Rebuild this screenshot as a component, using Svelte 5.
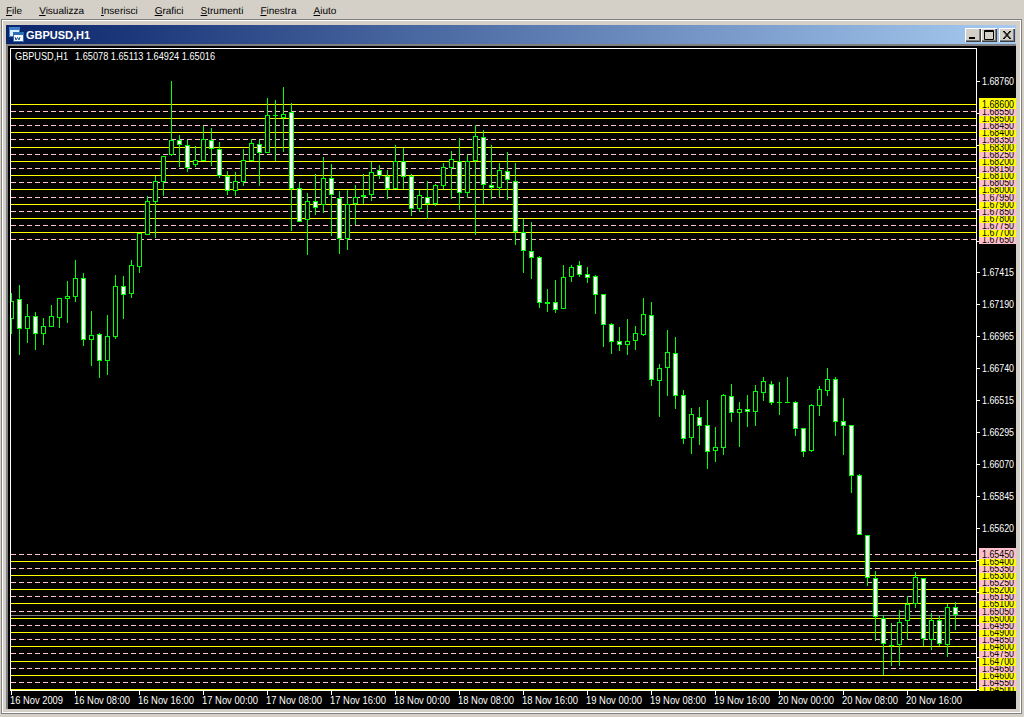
<script>
	const menu = ['File', 'Visualizza', 'Inserisci', 'Grafici', 'Strumenti', 'Finestra', 'Aiuto'];

	// y of each price level, from the top of its group, yellow and pink in turn
	const topYs = [104, 111, 118, 125, 132, 139, 147, 154, 161, 168, 175, 182, 189, 197, 204, 211, 218, 225, 232, 239];
	const lowYs = [554, 561, 568, 575, 582, 589, 596, 603, 611, 618, 625, 632, 639, 646, 653, 661, 668, 675, 682, 689];

	function level(start, ys, firstYellow) {
		return ys.map((y, i) => ({
			y,
			price: (start - i * 0.0005).toFixed(5),
			yellow: i % 2 === 0 ? firstYellow : !firstYellow
		}));
	}
	const levels = [...level(1.686, topYs, true), ...level(1.6545, lowYs, false)];

	const axisPrices = [
		['1.68760', 81],
		['1.67415', 272],
		['1.67190', 304],
		['1.66965', 336],
		['1.66740', 368],
		['1.66515', 400],
		['1.66295', 432],
		['1.66070', 464],
		['1.65845', 496],
		['1.65620', 528]
	];
	const priceTicks = [81, 113, 145, 177, 209, 241, 272, 304, 336, 368, 400, 432, 464, 496, 528, 560, 592, 625, 657, 689];

	const times = [
		'16 Nov 2009', '16 Nov 08:00', '16 Nov 16:00', '17 Nov 00:00', '17 Nov 08:00',
		'17 Nov 16:00', '18 Nov 00:00', '18 Nov 08:00', '18 Nov 16:00', '19 Nov 00:00',
		'19 Nov 08:00', '19 Nov 16:00', '20 Nov 00:00', '20 Nov 08:00', '20 Nov 16:00'
	];

	// high, low, body top, body bottom, white body
	const bars = [
		[293, 334, 301, 319, 0], [285, 355, 299, 329, 1], [304, 343, 316, 329, 0], [312, 350, 316, 334, 1],
		[318, 345, 326, 334, 0], [305, 327, 316, 327, 0], [298, 328, 298, 318, 0], [281, 323, 296, 299, 0],
		[260, 302, 278, 297, 0], [273, 346, 278, 340, 1], [311, 366, 335, 340, 0], [333, 378, 334, 361, 1],
		[315, 375, 336, 361, 0], [275, 339, 286, 337, 0], [276, 319, 286, 295, 1], [260, 298, 265, 294, 0],
		[233, 273, 233, 267, 0], [196, 235, 201, 235, 0], [176, 238, 181, 202, 0], [156, 196, 156, 182, 0],
		[81, 156, 140, 155, 0], [135, 167, 140, 145, 1], [140, 172, 145, 168, 1], [146, 167, 160, 165, 0],
		[126, 161, 139, 161, 0], [128, 166, 140, 149, 1], [142, 178, 149, 176, 1], [171, 195, 176, 191, 1],
		[172, 196, 181, 191, 0], [149, 186, 160, 182, 0], [139, 161, 143, 161, 0], [140, 186, 144, 153, 1],
		[98, 153, 115, 153, 0], [100, 161, 115, 116, 0], [87, 152, 114, 118, 0], [103, 231, 112, 189, 1],
		[183, 222, 188, 222, 1], [193, 255, 201, 220, 0], [174, 215, 201, 208, 1], [157, 213, 178, 205, 0],
		[164, 236, 178, 195, 1], [191, 254, 198, 239, 1], [190, 250, 204, 239, 0], [185, 225, 197, 204, 0],
		[174, 204, 195, 197, 0], [162, 201, 172, 195, 0], [165, 179, 170, 176, 1], [170, 199, 176, 189, 1],
		[145, 189, 161, 189, 0], [148, 189, 161, 177, 1], [174, 216, 176, 209, 1], [190, 212, 195, 209, 0],
		[181, 219, 197, 204, 1], [184, 206, 185, 204, 0], [163, 189, 167, 186, 0], [151, 199, 159, 168, 0],
		[138, 210, 161, 193, 1], [155, 198, 161, 193, 0], [125, 235, 136, 161, 0], [130, 204, 137, 185, 1],
		[145, 199, 185, 188, 1], [163, 197, 170, 188, 0], [152, 200, 171, 180, 1], [163, 245, 181, 232, 1],
		[219, 273, 232, 251, 1], [222, 279, 251, 258, 1], [256, 308, 257, 303, 1], [289, 312, 302, 304, 0],
		[280, 313, 302, 310, 1], [265, 309, 277, 309, 0], [265, 282, 267, 277, 0], [261, 277, 265, 275, 1],
		[267, 283, 274, 278, 1], [275, 314, 276, 295, 1], [294, 347, 294, 325, 1], [323, 354, 324, 342, 1],
		[327, 351, 341, 345, 1], [319, 355, 341, 345, 0], [326, 350, 333, 341, 0], [298, 336, 314, 335, 0],
		[302, 386, 315, 380, 1], [364, 417, 368, 381, 0], [330, 396, 352, 368, 0], [337, 409, 353, 396, 1],
		[390, 444, 395, 439, 1], [408, 454, 414, 438, 0], [407, 445, 417, 426, 1], [400, 469, 425, 452, 1],
		[427, 462, 447, 451, 0], [394, 455, 395, 448, 0], [384, 422, 396, 413, 1], [402, 447, 409, 413, 0],
		[395, 427, 409, 412, 1], [385, 426, 391, 412, 0], [377, 401, 381, 393, 0], [381, 405, 384, 403, 1],
		[382, 415, 402, 403, 0], [377, 403, 402, 403, 0], [401, 436, 402, 429, 1], [428, 457, 428, 452, 1],
		[404, 452, 405, 451, 0], [386, 416, 389, 406, 0], [368, 396, 379, 391, 0], [377, 436, 379, 422, 1],
		[398, 455, 421, 426, 1], [425, 493, 425, 476, 1], [474, 535, 475, 535, 1], [535, 586, 535, 578, 1],
		[571, 641, 578, 617, 1], [615, 675, 618, 644, 1], [623, 666, 645, 646, 0], [610, 666, 622, 645, 0],
		[596, 640, 604, 621, 0], [572, 608, 577, 604, 0], [578, 646, 578, 639, 1], [613, 650, 620, 640, 0],
		[616, 646, 620, 644, 1], [604, 657, 607, 645, 0], [602, 630, 607, 615, 1]
	];
</script>

<div class="screen">
	<nav class="menubar">
		{#each menu as item}
			<span class="menu-item"><u>{item[0]}</u>{item.slice(1)}</span>
		{/each}
	</nav>

	<div class="window">
		<header class="titlebar">
			<svg class="app-icon" width="15" height="15" viewBox="0 0 15 15">
				<rect x="0.5" y="0.5" width="10" height="9" fill="#dff0ff" stroke="#3f7fc8" />
				<rect x="1" y="1" width="9" height="2" fill="#3f7fc8" />
				<rect x="4.5" y="5.5" width="10" height="9" fill="#ffffff" stroke="#2f6fb8" />
				<rect x="5" y="6" width="9" height="2" fill="#2f6fb8" />
				<path d="M6 10l1 3 1.500-2.500 1.500 2.500 1-3" fill="none" stroke="#1f4f98" />
			</svg>
			<span class="title">GBPUSD,H1</span>
			<div class="buttons">
				<button aria-label="Riduci a icona">
					<svg width="12" height="10" viewBox="0 0 12 10"><rect x="2" y="7" width="6" height="2" fill="#000" /></svg>
				</button>
				<button aria-label="Ingrandisci">
					<svg width="12" height="10" viewBox="0 0 12 10"><path d="M1.500 0.500h9v9h-9zM1.500 1.500h9" fill="none" stroke="#000" /></svg>
				</button>
				<button class="close" aria-label="Chiudi">
					<svg width="12" height="10" viewBox="0 0 12 10"><path d="M2 1l7 8M9 1l-7 8M3 1l7 8M10 1l-7 8" fill="none" stroke="#000" /></svg>
				</button>
			</div>
		</header>

		<div class="client">
			<svg class="chart" width="1008" height="663" viewBox="8 46 1008 663">
				<defs>
					<clipPath id="plot"><rect x="11" y="49" width="965" height="641" /></clipPath>
					<clipPath id="scale"><rect x="977" y="49" width="39" height="642" /></clipPath>
				</defs>

				<g class="crisp" clip-path="url(#plot)">
					{#each levels as l}
						{#if l.yellow}
							<line x1="11" x2="976" y1={l.y + 0.5} y2={l.y + 0.5} stroke="#ffff00" />
						{:else}
							<line x1="11" x2="976" y1={l.y + 0.5} y2={l.y + 0.5} stroke="#ffc0cb" stroke-dasharray="5 3" />
						{/if}
					{/each}
					<line x1="11" x2="976" y1="615.5" y2="615.5" stroke="#808080" />

					{#each bars as [high, low, top, bottom, white], i}
						{@const x = 11 + i * 8}
						<line x1={x + 0.5} x2={x + 0.5} y1={high} y2={low} stroke="#00ff00" />
						{#if bottom - top <= 2}
							<rect x={x - 2} y={top} width="5" height={bottom - top} fill="#00ff00" />
						{:else}
							<rect
								x={x - 1.5}
								y={top + 0.5}
								width="4"
								height={bottom - top - 1}
								fill={white ? '#ffffff' : '#000000'}
								stroke="#00ff00"
							/>
						{/if}
					{/each}
				</g>

				<g class="crisp">
					{#each priceTicks as y}
						<line x1="977" x2="980" y1={y + 0.5} y2={y + 0.5} stroke="#ffffff" />
					{/each}
					{#each times as _, i}
						<line x1={11.5 + i * 64} x2={11.5 + i * 64} y1="691" y2="695" stroke="#ffffff" />
					{/each}
				</g>

				<text class="white" x="15" y="60" textLength="53" lengthAdjust="spacingAndGlyphs">GBPUSD,H1</text>
				<text class="white" x="75" y="60" textLength="140" lengthAdjust="spacingAndGlyphs">1.65078 1.65113 1.64924 1.65016</text>

				{#each axisPrices as [price, y]}
					<text class="white" x="982" y={y + 4} textLength="32" lengthAdjust="spacingAndGlyphs">{price}</text>
				{/each}

				<!-- the upper labels sit on top of the lower ones -->
				<g clip-path="url(#scale)">
					{#each [...levels].reverse() as l}
						<rect class="crisp" x="979" y={l.y - 6} width="37" height="11" fill={l.yellow ? '#ffff00' : '#ffc0cb'} />
						<text class="dark" x="982" y={l.y + 4} textLength="32" lengthAdjust="spacingAndGlyphs">{l.price}</text>
					{/each}
				</g>

				{#each times as label, i}
					<text
						class="white"
						x={10 + i * 64}
						y="704"
						textLength={i === 0 ? 53 : 56}
						lengthAdjust="spacingAndGlyphs">{label}</text>
				{/each}

				<rect class="crisp" x="10.500" y="48.500" width="966" height="642" fill="none" stroke="#ffffff" />
			</svg>
		</div>
	</div>
</div>

<style>
	:global(body) {
		background: #d4d0c8;
		overflow: hidden;
	}

	.screen {
		display: flex;
		flex-direction: column;
		width: 1024px;
		height: 717px;
		font-family: 'Liberation Sans', Arial, sans-serif;
		font-size: 11px;
		color: #000;
	}

	.menubar {
		display: flex;
		gap: 17px;
		align-items: center;
		height: 19px;
		padding: 4px 0 0 6px;
		box-sizing: border-box;
		font-size: 10px;
		text-rendering: geometricPrecision;
	}

	.window {
		display: flex;
		flex-direction: column;
		margin: 0 2px 0 1px;
		padding: 5px 5px 3px 4px;
		height: 695px;
		box-sizing: border-box;
		border: 1px solid #808080;
		box-shadow: inset 1px 1px 0 #ffffff, inset -1px -1px 0 #ffffff;
	}

	.titlebar {
		display: flex;
		align-items: center;
		flex: none;
		height: 19px;
		padding: 0 1px 0 3px;
		color: #fff;
		background: linear-gradient(to right, #0a246a, #a6caf0);
	}

	.app-icon {
		flex: none;
	}

	.title {
		margin-left: 2px;
		font-weight: bold;
		font-size: 11px;
		letter-spacing: 0;
	}

	.buttons {
		display: flex;
		margin-left: auto;
	}

	.buttons button {
		display: flex;
		align-items: center;
		justify-content: center;
		width: 16px;
		height: 14px;
		padding: 0;
		border: 0;
		background: #d4d0c8;
		box-shadow: inset 1px 1px 0 #ffffff, inset -1px -1px 0 #404040, inset -2px -2px 0 #808080;
	}

	.buttons .close {
		margin-left: 2px;
	}

	.client {
		flex: none;
		height: 665px;
		border-top: 2px solid #808080;
		border-left: 2px solid #808080;
		box-sizing: border-box;
		background: #000;
	}

	.chart {
		display: block;
		background: #000;
	}

	.crisp {
		shape-rendering: crispEdges;
	}

	.chart text {
		font-family: 'Liberation Sans', Arial, sans-serif;
		font-size: 11px;
	}

	.white {
		fill: #ffffff;
	}

	.dark {
		fill: #000000;
	}
</style>
